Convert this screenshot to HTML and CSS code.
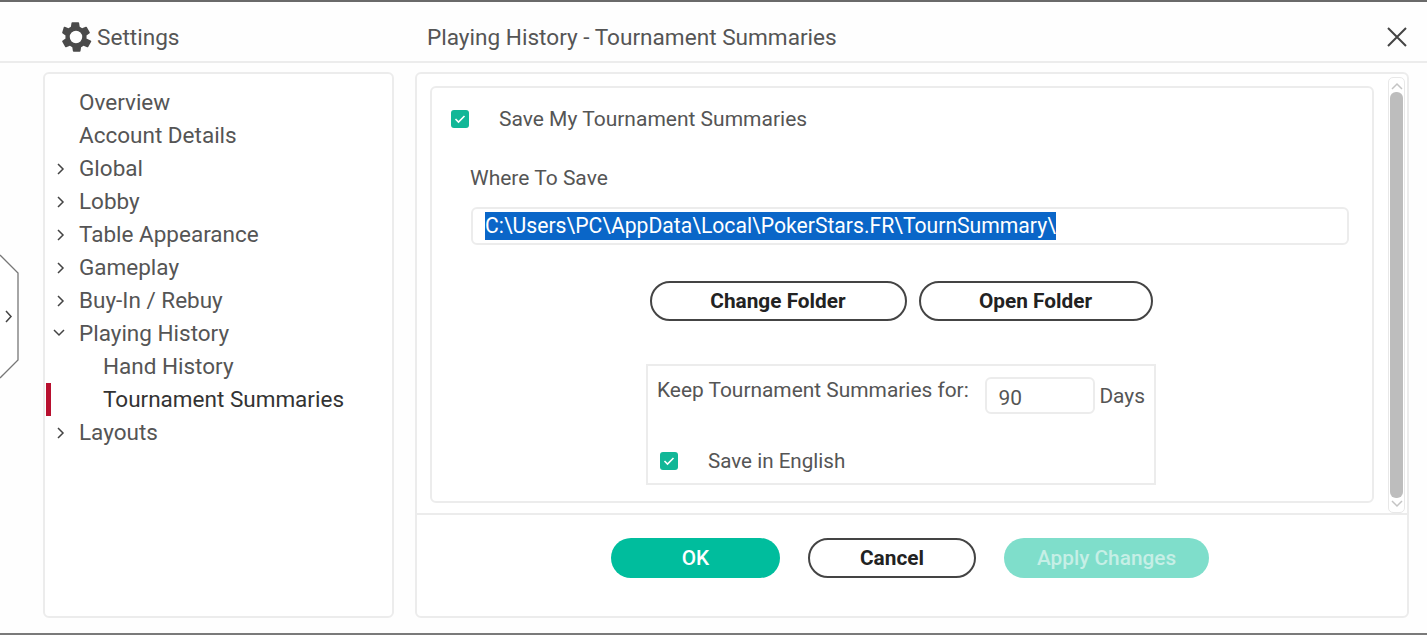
FILE: index.html
```html
<!DOCTYPE html>
<html lang="en">
  <head>
    <meta charset="UTF-8" />
    <meta name="viewport" content="width=device-width, initial-scale=1.0" />
    <title>Settings</title>
    <link rel="stylesheet" href="styles.css">
  </head>
  <body>
    <div class="window">
      <div class="side-tab">
        <svg width="20" height="126" viewBox="0 0 20 126">
          <path class="tab-outline" d="M0 1 L18 19 V106 L0 124" />
          <path class="chevron" d="M6 57 L11 62.500 L6 68" />
        </svg>
      </div>

      <header class="header">
        <div class="brand">
          <svg class="gear" width="34" height="34" viewBox="0 0 24 24">
            <path fill-rule="evenodd" d="M19.400 13a7.600 7.600 0 0 0 0-2l2.200-1.700a.6.600 0 0 0 .1-.7l-2.100-3.600a.6.600 0 0 0-.7-.2l-2.600 1a7.500 7.500 0 0 0-1.700-1l-.4-2.700a.6.600 0 0 0-.6-.5h-4.200a.6.600 0 0 0-.6.500l-.4 2.700a7.500 7.500 0 0 0-1.700 1l-2.600-1a.6.600 0 0 0-.7.200L2.300 8.600a.6.600 0 0 0 .1.700L4.600 11a7.600 7.600 0 0 0 0 2l-2.200 1.700a.6.600 0 0 0-.1.700l2.100 3.600a.6.600 0 0 0 .7.200l2.600-1a7.500 7.500 0 0 0 1.700 1l.4 2.700a.6.600 0 0 0 .6.500h4.200a.6.600 0 0 0 .6-.5l.4-2.700a7.500 7.500 0 0 0 1.700-1l2.600 1a.6.600 0 0 0 .7-.2l2.100-3.600a.6.600 0 0 0-.1-.7zM12 16.400a4.400 4.400 0 1 1 0-8.800 4.400 4.400 0 0 1 0 8.800z" />
          </svg>
          <span>Settings</span>
        </div>
        <div class="page-title">Playing History - Tournament Summaries</div>
        <button type="button" class="close-btn" aria-label="Close">
          <svg width="20" height="20" viewBox="0 0 20 20">
            <path d="M1 1 L19 19 M19 1 L1 19" />
          </svg>
        </button>
      </header>

      <div class="content">
        <nav class="sidebar">
          <div class="nav-item">Overview</div>
          <div class="nav-item">Account Details</div>
          <div class="nav-item"><svg class="nav-arrow" width="10" height="14" viewBox="0 0 10 14"><path d="M2 2 L7 7 L2 12" /></svg>Global</div>
          <div class="nav-item"><svg class="nav-arrow" width="10" height="14" viewBox="0 0 10 14"><path d="M2 2 L7 7 L2 12" /></svg>Lobby</div>
          <div class="nav-item"><svg class="nav-arrow" width="10" height="14" viewBox="0 0 10 14"><path d="M2 2 L7 7 L2 12" /></svg>Table Appearance</div>
          <div class="nav-item"><svg class="nav-arrow" width="10" height="14" viewBox="0 0 10 14"><path d="M2 2 L7 7 L2 12" /></svg>Gameplay</div>
          <div class="nav-item"><svg class="nav-arrow" width="10" height="14" viewBox="0 0 10 14"><path d="M2 2 L7 7 L2 12" /></svg>Buy-In / Rebuy</div>
          <div class="nav-item"><svg class="nav-arrow nav-arrow-open" width="14" height="10" viewBox="0 0 14 10"><path d="M2 2 L7 7 L12 2" /></svg>Playing History</div>
          <div class="nav-item nav-sub">Hand History</div>
          <div class="nav-item nav-sub nav-active">Tournament Summaries</div>
          <div class="nav-item"><svg class="nav-arrow" width="10" height="14" viewBox="0 0 10 14"><path d="M2 2 L7 7 L2 12" /></svg>Layouts</div>
        </nav>

        <main class="main">
          <div class="scroll-area">
            <section class="panel">
              <label class="check-row">
                <span class="checkbox"><svg width="12" height="10" viewBox="0 0 12 10"><path d="M1.500 5 L4.500 8 L10.500 2" /></svg></span>
                <span>Save My Tournament Summaries</span>
              </label>

              <div class="field-label">Where To Save</div>
              <div class="path-input"><span class="selected">C:\Users\PC\AppData\Local\PokerStars.FR\TournSummary\</span></div>

              <div class="folder-btns">
                <button type="button" class="btn btn-change">Change Folder</button>
                <button type="button" class="btn btn-open">Open Folder</button>
              </div>

              <div class="keep-box">
                <div class="keep-row">
                  <span class="keep-label">Keep Tournament Summaries for:</span>
                  <div class="days-input">90</div>
                  <span class="days-label">Days</span>
                </div>
                <label class="check-row check-row-small">
                  <span class="checkbox"><svg width="12" height="10" viewBox="0 0 12 10"><path d="M1.500 5 L4.500 8 L10.500 2" /></svg></span>
                  <span>Save in English</span>
                </label>
              </div>
            </section>

            <div class="scrollbar">
              <svg class="scroll-arrow" width="14" height="10" viewBox="0 0 14 10"><path d="M2 8 L7 3 L12 8" /></svg>
              <div class="scroll-thumb"></div>
              <svg class="scroll-arrow" width="14" height="10" viewBox="0 0 14 10"><path d="M2 2 L7 7 L12 2" /></svg>
            </div>
          </div>

          <footer class="footer">
            <button type="button" class="btn btn-ok">OK</button>
            <button type="button" class="btn btn-cancel">Cancel</button>
            <button type="button" class="btn btn-apply">Apply Changes</button>
          </footer>
        </main>
      </div>
    </div>
  </body>
</html>
```

FILE: styles.css
```css
* {
  box-sizing: border-box;
}
body {
  margin: 0;
  background-color: white;
  font-family: Roboto, "Liberation Sans", sans-serif;
  color: #555;
}
.window {
  position: relative;
  display: flex;
  flex-direction: column;
  height: 635px;
  overflow: hidden;
  border-top: 2px solid #6a6a6a;
  border-bottom: 2px solid #7a7a7a;
  background-color: #fefefe;
}
.side-tab {
  position: absolute;
  left: 0;
  top: 252px;
  line-height: 0;
}
.tab-outline {
  fill: white;
  stroke: #777;
  stroke-width: 1.300;
}
.chevron {
  fill: none;
  stroke: #444;
  stroke-width: 1.500;
}

/* header */
.header {
  display: flex;
  align-items: center;
  flex: none;
  height: 61px;
  padding-top: 11px;
  border-bottom: 2px solid #ececec;
  font-size: 22.600px;
}
.brand {
  display: flex;
  align-items: center;
  gap: 4px;
  width: 427px;
  padding-left: 59px;
}
.gear {
  fill: #4a4a4a;
}
.page-title {
  flex: 1;
}
.close-btn {
  display: flex;
  margin-right: 20px;
  padding: 0;
  border: none;
  background: none;
}
.close-btn path {
  fill: none;
  stroke: #444;
  stroke-width: 2;
}

/* sidebar and main */
.content {
  display: flex;
  flex: 1;
  gap: 21px;
  padding: 9px 18px 15px 43px;
  min-height: 0;
}
.sidebar {
  width: 351px;
  padding-top: 12px;
  border: 2px solid #ececec;
  border-radius: 6px;
  background-color: white;
}
.nav-item {
  position: relative;
  height: 33px;
  padding-left: 34px;
  font-size: 22.500px;
  line-height: 33px;
}
.nav-sub {
  padding-left: 58px;
}
.nav-active {
  color: #333;
}
.nav-active::before {
  content: "";
  position: absolute;
  left: 1px;
  top: 0;
  width: 5px;
  height: 33px;
  background-color: #b8102f;
}
.nav-arrow {
  position: absolute;
  left: 11px;
  top: 10px;
}
.nav-arrow-open {
  left: 7px;
  top: 11px;
}
.nav-arrow path,
.scroll-arrow path {
  fill: none;
  stroke: #444;
  stroke-width: 1.500;
}
.main {
  display: flex;
  flex: 1;
  flex-direction: column;
  border: 2px solid #ececec;
  border-radius: 6px;
  background-color: white;
}
.scroll-area {
  display: flex;
  flex: none;
  height: 441px;
  gap: 14px;
  padding: 12px 2px 10px 13px;
  border-bottom: 2px solid #ececec;
}
.panel {
  flex: 1;
  height: 417px;
  padding: 21px 23px 0 19px;
  border: 2px solid #ececec;
  border-radius: 6px;
}
.scrollbar {
  display: flex;
  flex-direction: column;
  align-items: center;
  width: 17px;
  height: 436px;
  margin-top: -9px;
  padding: 3px 0;
  border: 1px solid #e8e8e8;
  border-radius: 5px;
}
.scroll-arrow path {
  stroke: #c4c4c4;
}
.scroll-thumb {
  flex: 1;
  width: 13px;
  margin: 1px 0;
  border-radius: 6px;
  background-color: #bdbdbd;
}

/* form parts */
.check-row {
  display: flex;
  align-items: center;
  gap: 30px;
  height: 20px;
  font-size: 21px;
}
.checkbox {
  display: flex;
  flex: none;
  align-items: center;
  justify-content: center;
  width: 18px;
  height: 18px;
  border-radius: 3px;
  background-color: #11b797;
}
.checkbox path {
  fill: none;
  stroke: white;
  stroke-width: 1.600;
}
.field-label {
  margin: 37px 0 0 19px;
  font-size: 21px;
  line-height: 24px;
}
.path-input {
  height: 38px;
  margin: 17px 0 0 20px;
  padding: 3px 12px;
  border: 2px solid #ececec;
  border-radius: 6px;
  font-size: 21.150px;
  line-height: 28px;
}
.selected {
  display: inline-block;
  background-color: #0a66c8;
  color: white;
}
.folder-btns {
  display: flex;
  justify-content: center;
  gap: 12px;
  margin: 36px 0 0 2px;
}
.btn {
  height: 40px;
  padding: 0;
  border: 2px solid #444;
  border-radius: 20px;
  background-color: white;
  color: #222;
  font-family: Roboto, "Liberation Sans", sans-serif;
  font-size: 20.800px;
  font-weight: 700;
}
.btn-change {
  width: 257px;
}
.btn-open {
  width: 234px;
}
.keep-box {
  width: 510px;
  height: 121px;
  margin: 43px 0 0 195px;
  padding: 11px 9px 0;
  border: 2px solid #ececec;
}
.keep-row {
  display: flex;
  height: 37px;
  font-size: 20.900px;
}
.keep-label {
  width: 328px;
  line-height: 26px;
}
.days-input {
  width: 111px;
  height: 37px;
  padding-left: 12px;
  border: 2px solid #ececec;
  border-radius: 6px;
  line-height: 38px;
}
.days-label {
  margin-left: 4px;
  line-height: 38px;
}
.check-row-small {
  margin: 37px 0 0 3px;
  font-size: 20.600px;
}

/* footer */
.footer {
  display: flex;
  flex: 1;
  align-items: flex-start;
  justify-content: center;
  gap: 28px;
  padding: 23px 4px 0 0;
}
.btn-ok,
.btn-apply {
  border: none;
  color: white;
  font-weight: 500;
}
.btn-ok {
  width: 169px;
  background-color: #00bd9d;
}
.btn-cancel {
  width: 168px;
}
.btn-apply {
  width: 205px;
  background-color: #7fdecb;
  color: #c6efe6;
}
```
